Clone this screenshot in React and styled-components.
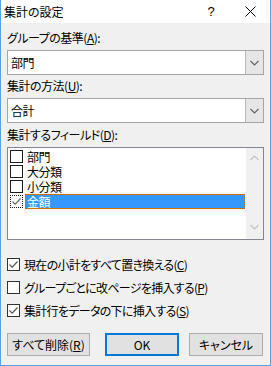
import React from "react";
import styled, { createGlobalStyle } from "styled-components";

const GlobalStyle = createGlobalStyle`
    html, body {
        margin: 0;
        padding: 0;
        background: #ffffff;
    }
    body {
        font-family: "Noto Sans CJK JP", "Liberation Sans", sans-serif;
        font-size: 12px;
        font-feature-settings: "palt";
        color: #000000;
    }
`;

const fields = [
    { name: "部門", checked: false },
    { name: "大分類", checked: false },
    { name: "小分類", checked: false },
    { name: "金額", checked: true, selected: true },
];

const options = [
    { text: "現在の小計をすべて置き換える", key: "C", checked: true },
    { text: "グループごとに改ページを挿入する", key: "P", checked: false },
    { text: "集計行をデータの下に挿入する", key: "S", checked: true },
];

const CheckIcon = ({ color }) => (
    <svg width="11" height="11" viewBox="0 0 11 11">
        <path d="M1.5 5.5 L4.2 8.2 L9.5 2.5" fill="none" stroke={color} strokeWidth="1.2" />
    </svg>
);

const Chevron = ({ up, color = "#606060" }) => (
    <svg width="9" height="6" viewBox="0 0 9 6">
        <path
            d={up ? "M0.5 5 L4.5 1 L8.5 5" : "M0.5 1 L4.5 5 L8.5 1"}
            fill="none"
            stroke={color}
            strokeWidth="1.1"
        />
    </svg>
);

const Select = ({ value }) => (
    <SelectBox>
        <SelectValue>{value}</SelectValue>
        <DropButton>
            <Chevron />
        </DropButton>
    </SelectBox>
);

const App = () => {
    return (
        <>
            <GlobalStyle />
            <Window>
                <TitleBar>
                    <Title>集計の設定</Title>
                    <TitleButtons>
                        <Help>?</Help>
                        <Close>
                            <svg width="11" height="11" viewBox="0 0 11 11">
                                <path d="M0.5 0.5 L10.5 10.5 M10.5 0.5 L0.5 10.5" stroke="#000" strokeWidth="1" />
                            </svg>
                        </Close>
                    </TitleButtons>
                </TitleBar>
                <Body>
                    <Label>
                        グループの基準(<u>A</u>):
                    </Label>
                    <Select value="部門" />
                    <Label $top={3}>
                        集計の方法(<u>U</u>):
                    </Label>
                    <Select value="合計" />
                    <Label $top={4}>
                        集計するフィールド(<u>D</u>):
                    </Label>
                    <ListBox>
                        <ListItems>
                            {fields.map((f) => (
                                <ListRow key={f.name}>
                                    <ListCheck $focus={f.selected}>
                                        {f.checked && <CheckIcon color="#6a6a6a" />}
                                    </ListCheck>
                                    <ListText $selected={f.selected}>{f.name}</ListText>
                                </ListRow>
                            ))}
                        </ListItems>
                        <ScrollBar>
                            <Chevron up color="#c2c2c2" />
                            <Chevron color="#c2c2c2" />
                        </ScrollBar>
                    </ListBox>
                    <Options>
                        {options.map((o) => (
                            <OptionRow key={o.key}>
                                <Box>{o.checked && <CheckIcon color="#555555" />}</Box>
                                <span>
                                    {o.text}(<u>{o.key}</u>)
                                </span>
                            </OptionRow>
                        ))}
                    </Options>
                    <Buttons>
                        <Button $width={83}>
                            すべて削除(<u>R</u>)
                        </Button>
                        <Button $width={74} $primary>
                            OK
                        </Button>
                        <Button $width={74}>キャンセル</Button>
                    </Buttons>
                </Body>
            </Window>
        </>
    );
};

const Window = styled.div`
    width: 271px;
    height: 366px;
    box-sizing: border-box;
    border: 1px solid #5aa2e0;
    border-top: none;
    background: #f0f0f0;
    display: flex;
    flex-direction: column;
`;

const TitleBar = styled.div`
    height: 23px;
    background: #ffffff;
    display: flex;
    align-items: center;
    justify-content: space-between;
    padding-left: 3px;
`;

const Title = styled.div`
    font-size: 12px;
    line-height: 16px;
`;

const TitleButtons = styled.div`
    display: flex;
    align-items: center;
    height: 100%;
`;

const Help = styled.div`
    width: 28px;
    text-align: center;
    font-family: "Liberation Sans", sans-serif;
    font-size: 13px;
    margin-right: 8px;
`;

const Close = styled.div`
    width: 34px;
    display: flex;
    justify-content: center;
    align-items: center;
    padding-right: 3px;
`;

const Body = styled.div`
    flex: 1;
    padding: 7px 6px 0 6px;
    display: flex;
    flex-direction: column;
    letter-spacing: -0.5px;
`;

const Label = styled.div`
    line-height: 16px;
    margin-top: ${(p) => p.$top || 0}px;
    margin-bottom: 4px;
    white-space: nowrap;
`;

const SelectBox = styled.div`
    height: 25px;
    box-sizing: border-box;
    border: 1px solid #a5a5a5;
    background: #ffffff;
    display: flex;
`;

const SelectValue = styled.div`
    flex: 1;
    padding-left: 3px;
    line-height: 23px;
`;

const DropButton = styled.div`
    width: 17px;
    background: #e6e6e6;
    border-left: 1px solid #b9b9b9;
    display: flex;
    align-items: center;
    justify-content: center;
`;

const ListBox = styled.div`
    height: 93px;
    box-sizing: border-box;
    border: 1px solid #828790;
    background: #ffffff;
    display: flex;
`;

const ListItems = styled.div`
    flex: 1;
    padding: 1px 0 0 2px;
    display: flex;
    flex-direction: column;
`;

const ListRow = styled.div`
    height: 15px;
    display: flex;
    align-items: center;
`;

const ListCheck = styled.div`
    width: 13px;
    height: 13px;
    box-sizing: border-box;
    border: 1px ${(p) => (p.$focus ? "dotted" : "solid")} #1a1a1a;
    background: #ffffff;
    display: flex;
    align-items: center;
    justify-content: center;
    margin-right: 2px;
`;

const ListText = styled.div`
    flex: 1;
    height: 15px;
    line-height: 13px;
    box-sizing: border-box;
    padding-left: 1px;
    margin-right: 1px;
    color: ${(p) => (p.$selected ? "#ffffff" : "#000000")};
    background: ${(p) => (p.$selected ? "#3399ff" : "transparent")};
    border: 1px dotted ${(p) => (p.$selected ? "#cc6600" : "transparent")};
`;

const ScrollBar = styled.div`
    width: 17px;
    background: #f0f0f0;
    display: flex;
    flex-direction: column;
    align-items: center;
    justify-content: space-between;
    padding: 7px 0 9px;
    box-sizing: border-box;
`;

const Options = styled.div`
    margin-top: 16px;
    display: flex;
    flex-direction: column;
    gap: 7px;
`;

const OptionRow = styled.div`
    height: 16px;
    display: flex;
    align-items: center;
    white-space: nowrap;
    letter-spacing: -0.7px;
`;

const Box = styled.div`
    width: 13px;
    height: 13px;
    box-sizing: border-box;
    border: 1px solid #333333;
    background: #ffffff;
    display: flex;
    align-items: center;
    justify-content: center;
    margin-right: 4px;
`;

const Buttons = styled.div`
    margin-top: 15px;
    display: flex;
    align-items: center;
    justify-content: space-between;
    padding-right: 1px;
    letter-spacing: 0;
`;

const Button = styled.div`
    width: ${(p) => p.$width}px;
    height: 23px;
    box-sizing: border-box;
    background: #e1e1e1;
    border: ${(p) => (p.$primary ? "2px solid #0078d7" : "1px solid #adadad")};
    display: flex;
    align-items: center;
    justify-content: center;
    white-space: nowrap;
    &:nth-child(2) {
        margin-left: auto;
        margin-right: 10px;
    }
`;

export default App;
